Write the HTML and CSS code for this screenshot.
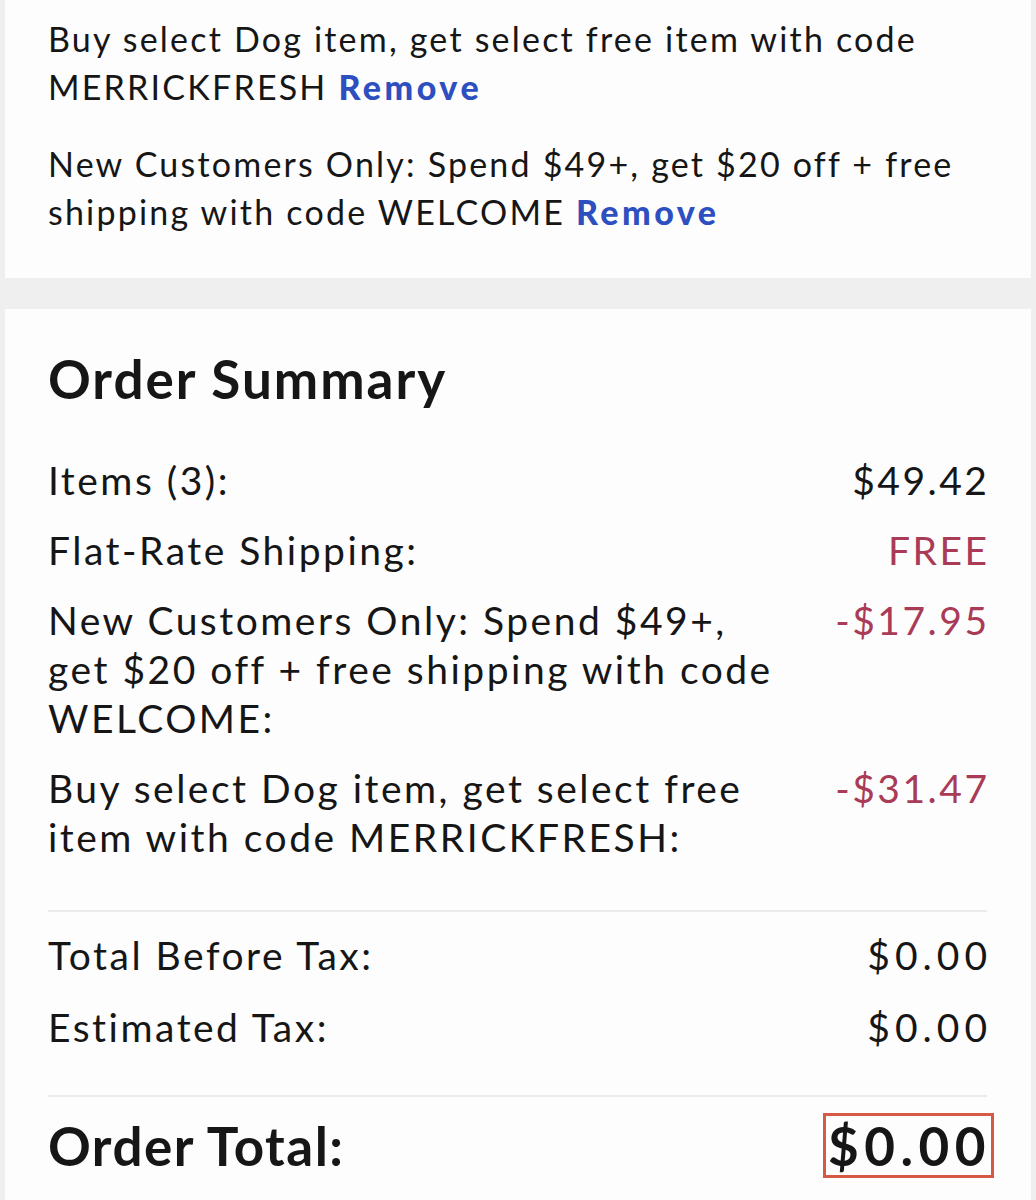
FILE: index.html
```html
<!DOCTYPE html>
<html>
<head>
<meta charset="utf-8">
<link rel="stylesheet" href="styles.css">
</head>
<body>
<div class="page">
  <section class="card promos">
    <p class="promo">Buy select Dog item, get select free item with code MERRICKFRESH <a class="remove">Remove</a></p>
    <p class="promo">New Customers Only: Spend $49+, get $20 off + free shipping with code WELCOME <a class="remove">Remove</a></p>
  </section>
  <section class="card summary">
    <h2 class="title">Order Summary</h2>
    <div class="rows">
      <div class="row"><span class="label">Items (3):</span><span class="value">$49.42</span></div>
      <div class="row"><span class="label">Flat-Rate Shipping:</span><span class="value red">FREE</span></div>
      <div class="row"><span class="label">New Customers Only: Spend $49+, get $20 off + free shipping with code WELCOME:</span><span class="value red">-$17.95</span></div>
      <div class="row"><span class="label">Buy select Dog item, get select free item with code MERRICKFRESH:</span><span class="value red">-$31.47</span></div>
    </div>
    <div class="rows bordered">
      <div class="row"><span class="label">Total Before Tax:</span><span class="value wide">$0.00</span></div>
      <div class="row"><span class="label">Estimated Tax:</span><span class="value wide">$0.00</span></div>
    </div>
    <div class="total bordered">
      <span class="total-label">Order Total:</span>
      <span class="total-value">$0.00</span>
    </div>
  </section>
</div>
</body>
</html>
```
FILE: styles.css
```css
html, body {
  margin: 0;
  padding: 0;
  background: #efefef;
}
body {
  font-family: "Lato", "Noto Sans", sans-serif;
  color: #161616;
}
.page {
  padding: 0 5px;
  display: flex;
  flex-direction: column;
  gap: 31px;
}
.card {
  background: #fdfdfd;
  padding: 0 44px 0 43px;
}
.promos {
  padding-top: 15px;
  padding-bottom: 42px;
}
.promo {
  margin: 0 0 29px;
  font-size: 34px;
  line-height: 48px;
  letter-spacing: 2.2px;
}
.promo:last-child {
  margin-bottom: 0;
}
.remove {
  color: #2d4fbf;
  font-weight: 900;
  letter-spacing: 3.5px;
}
.summary {
  padding-top: 40px;
  padding-bottom: 40px;
}
.title {
  margin: 0 0 47px;
  font-size: 53px;
  line-height: 60px;
  font-weight: 700;
  letter-spacing: 2px;
}
.rows {
  display: flex;
  flex-direction: column;
  gap: 21px;
  padding-bottom: 48px;
}
.row {
  display: flex;
  justify-content: space-between;
  gap: 20px;
  font-size: 39px;
  line-height: 49px;
  letter-spacing: 2.5px;
}
.label {
  flex: 0 1 750px;
}
.value {
  white-space: nowrap;
  margin-right: -2.5px;
}
.value.wide {
  letter-spacing: 5px;
  margin-right: -5px;
}
.red {
  color: #a93b57;
}
.bordered {
  border-top: 2px solid #ebebeb;
}
.rows.bordered {
  padding-top: 19px;
  gap: 23px;
  padding-bottom: 43px;
}
.total {
  display: flex;
  justify-content: space-between;
  align-items: center;
  padding-top: 16px;
  font-weight: 700;
  font-size: 53px;
  line-height: 59px;
}
.total-label {
  letter-spacing: 1.5px;
}
.total-value {
  border: 3px solid #d65a43;
  padding: 0 0 0 2px;
  letter-spacing: 5.5px;
  margin-right: -7px;
}
```
